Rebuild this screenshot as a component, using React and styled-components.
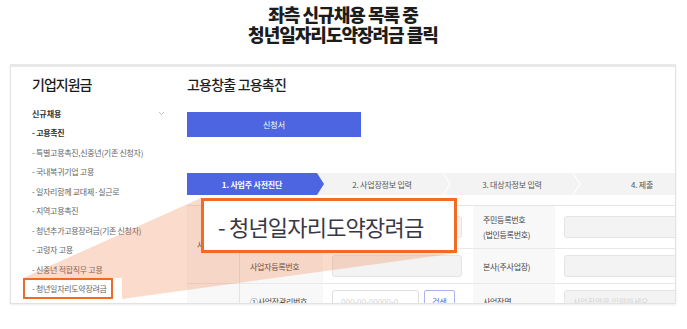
import React from 'react';
import styled, { createGlobalStyle } from 'styled-components';

const GlobalStyle = createGlobalStyle`
  html, body {
    margin: 0;
    padding: 0;
    background: #fff;
  }
  body {
    font-family: "Noto Sans CJK KR", "Noto Sans", sans-serif;
    color: #333;
  }
  * {
    box-sizing: border-box;
  }
`;

const Page = styled.div`
  position: relative;
  width: 687px;
  height: 329px;
  overflow: hidden;
  padding: 0 11px 0 10px;
`;

const Heading = styled.h1`
  margin: 0;
  padding-top: 3.5px;
  height: 64px;
  text-align: center;
  font-size: 18px;
  line-height: 20px;
  font-weight: 900;
  letter-spacing: -1px;
  color: #1c1c1c;
`;

const Panel = styled.div`
  display: flex;
  height: 240px;
  overflow: hidden;
  border: 1px solid #e2e2e2;
  border-top: 3px solid #e9e9e9;
  box-shadow: 0 1px 2px rgba(0, 0, 0, 0.08);
`;

const Sidebar = styled.aside`
  flex: 0 0 176px;
  padding: 7px 22px 0 21px;
`;

const SideTitle = styled.div`
  font-size: 14px;
  line-height: 20px;
  font-weight: 500;
  letter-spacing: -1px;
  color: #1a1a1a;
`;

const GroupHead = styled.div`
  display: flex;
  justify-content: space-between;
  align-items: center;
  margin-top: 12px;
  height: 14px;
  font-size: 8px;
  font-weight: 700;
  color: #333;
`;

const MenuList = styled.ul`
  list-style: none;
  margin: 3px 0 0;
  padding: 0;
`;

const MenuItem = styled.li`
  display: flex;
  align-items: center;
  height: 19.5px;
  font-size: 8px;
  letter-spacing: -0.3px;
  color: ${(p) => (p.$strong ? '#333' : '#666')};
  font-weight: ${(p) => (p.$strong ? 700 : 400)};
`;

const MenuText = styled.span`
  display: inline-block;
  line-height: 21px;
  margin-left: -9px;
  padding: 0 6px 0 9px;
  box-shadow: ${(p) => (p.$active ? 'inset 0 0 0 2px #ef6a27' : 'none')};
`;

const Main = styled.section`
  flex: 0 0 520px;
  padding-top: 6.5px;
`;

const MainTitle = styled.div`
  font-size: 14px;
  line-height: 20px;
  font-weight: 500;
  letter-spacing: -0.8px;
  color: #1e1e1e;
`;

const ApplyButton = styled.button`
  display: flex;
  align-items: center;
  justify-content: center;
  margin-top: 18.5px;
  width: 174px;
  height: 25px;
  padding: 0;
  border: none;
  background: #4d65e1;
  color: #fff;
  font-family: inherit;
  font-size: 8px;
`;

const Steps = styled.div`
  display: grid;
  grid-template-columns: repeat(4, 130px);
  margin-top: 36px;
  height: 22px;
  background: #f3f3f3;
`;

const Step = styled.div`
  position: relative;
  display: flex;
  align-items: center;
  justify-content: center;
  font-size: 8px;
  letter-spacing: -0.2px;
  color: ${(p) => (p.$active ? '#fff' : '#555')};
  font-weight: ${(p) => (p.$active ? 700 : 400)};
  background: ${(p) => (p.$active ? '#4d65e1' : 'transparent')};

  ${(p) =>
    p.$active &&
    `
    &::after {
      content: '';
      position: absolute;
      right: -7px;
      top: 0;
      border-left: 7px solid #4d65e1;
      border-top: 11px solid transparent;
      border-bottom: 11px solid transparent;
      z-index: 1;
    }
  `}
`;

const StepSep = styled.svg`
  position: absolute;
  right: -4px;
  top: 0;
`;

const Table = styled.div`
  display: grid;
  grid-template-columns: 53px 83px 150px 82px 152px;
  grid-template-rows: 43px 35px 35px;
  margin-top: 10px;
  border-top: 1px solid #e4e4e4;
`;

const GroupCell = styled.div`
  grid-row: span ${(p) => p.$span || 1};
  display: flex;
  align-items: center;
  padding-left: 10px;
  background: #f8f8f8;
  border-right: 1px solid #e4e4e4;
  border-bottom: 1px solid #e8e8e8;
  font-size: 8px;
  color: #444;
`;

const LabelCell = styled.div`
  display: flex;
  flex-direction: column;
  justify-content: center;
  padding-left: 10px;
  background: #f8f8f8;
  border-bottom: 1px solid #e8e8e8;
  font-size: 8px;
  line-height: 15px;
  letter-spacing: -0.3px;
  color: #444;
`;

const InputCell = styled.div`
  display: flex;
  align-items: center;
  gap: 5px;
  padding: 0 11px 0 9px;
  border-bottom: 1px solid #e8e8e8;
`;

const Field = styled.div`
  display: flex;
  align-items: center;
  height: 22px;
  flex: ${(p) => (p.$width ? `0 0 ${p.$width}px` : '1')};
  padding-left: 8px;
  border: 1px solid ${(p) => (p.$white ? '#dedede' : '#e4e4e4')};
  border-radius: 3px;
  background: ${(p) => (p.$white ? '#fff' : '#f3f3f3')};
  font-size: 8px;
  color: #d4d4d4;
`;

const SearchButton = styled.button`
  width: 31px;
  height: 22px;
  padding: 0;
  border: 1px solid #a9b3f1;
  border-radius: 2px;
  background: #fff;
  color: #5468e0;
  font-family: inherit;
  font-size: 8px;
`;

const Wedge = styled.svg`
  position: absolute;
  left: 0;
  top: 0;
  pointer-events: none;
`;

const Callout = styled.div`
  position: absolute;
  left: 201px;
  top: 198px;
  width: 256px;
  height: 55px;
  display: flex;
  align-items: center;
  padding-left: 14px;
  border: 3px solid #f26b22;
  background: #fff;
  font-size: 22px;
  letter-spacing: -0.8px;
  color: #373846;
`;

const Chevron = () => (
  <svg width="7" height="5" viewBox="0 0 7 5">
    <path d="M1 1l2.5 2.5L6 1" fill="none" stroke="#b5b5b5" strokeWidth="0.8" />
  </svg>
);

const Sep = () => (
  <StepSep width="8" height="22" viewBox="0 0 8 22">
    <path d="M0 0l7 11-7 11" fill="none" stroke="#fff" strokeWidth="1.2" />
  </StepSep>
);

const menu = [
  { label: '- 고용촉진', strong: true },
  { label: '- 특별고용촉진,신중년(기존 신청자)' },
  { label: '- 국내복귀기업 고용' },
  { label: '- 일자리함께 교대제·실근로' },
  { label: '- 지역고용촉진' },
  { label: '- 청년추가고용장려금(기존 신청자)' },
  { label: '- 고령자 고용' },
  { label: '- 신중년 적합직무 고용' },
  { label: '- 청년일자리도약장려금', active: true },
];

const steps = ['1. 사업주 사전진단', '2. 사업장정보 입력', '3. 대상자정보 입력', '4. 제출'];

export default function App() {
  return (
    <>
      <GlobalStyle />
      <Page>
        <Heading>
          좌측 신규채용 목록 중
          <br />
          청년일자리도약장려금 클릭
        </Heading>

        <Panel>
          <Sidebar>
            <SideTitle>기업지원금</SideTitle>
            <GroupHead>
              신규채용
              <Chevron />
            </GroupHead>
            <MenuList>
              {menu.map((m) => (
                <MenuItem key={m.label} $strong={m.strong}>
                  <MenuText $active={m.active}>{m.label}</MenuText>
                </MenuItem>
              ))}
            </MenuList>
          </Sidebar>

          <Main>
            <MainTitle>고용창출 고용촉진</MainTitle>
            <ApplyButton>신청서</ApplyButton>

            <Steps>
              {steps.map((s, i) => (
                <Step key={s} $active={i === 0}>
                  {s}
                  {(i === 1 || i === 2) && <Sep />}
                </Step>
              ))}
            </Steps>

            <Table>
              <GroupCell $span={2}>사업장</GroupCell>
              <LabelCell>대표자명</LabelCell>
              <InputCell>
                <Field />
              </InputCell>
              <LabelCell>
                <span>주민등록번호</span>
                <span>(법인등록번호)</span>
              </LabelCell>
              <InputCell>
                <Field />
              </InputCell>

              <LabelCell>사업자등록번호</LabelCell>
              <InputCell>
                <Field />
              </InputCell>
              <LabelCell>본사(주사업장)</LabelCell>
              <InputCell>
                <Field />
              </InputCell>

              <GroupCell />
              <LabelCell>①사업장관리번호</LabelCell>
              <InputCell>
                <Field $white $width={87}>
                  000-00-00000-0
                </Field>
                <SearchButton>검색</SearchButton>
              </InputCell>
              <LabelCell>사업장명</LabelCell>
              <InputCell>
                <Field>사업장명을 입력하세요</Field>
              </InputCell>
            </Table>
          </Main>
        </Panel>

        <Wedge width="687" height="329" viewBox="0 0 687 329">
          <polygon
            points="23,278 201,198 457,198 457,253 122,299 122,278"
            fill="rgba(240,110,50,0.25)"
          />
        </Wedge>

        <Callout>- 청년일자리도약장려금</Callout>
      </Page>
    </>
  );
}
